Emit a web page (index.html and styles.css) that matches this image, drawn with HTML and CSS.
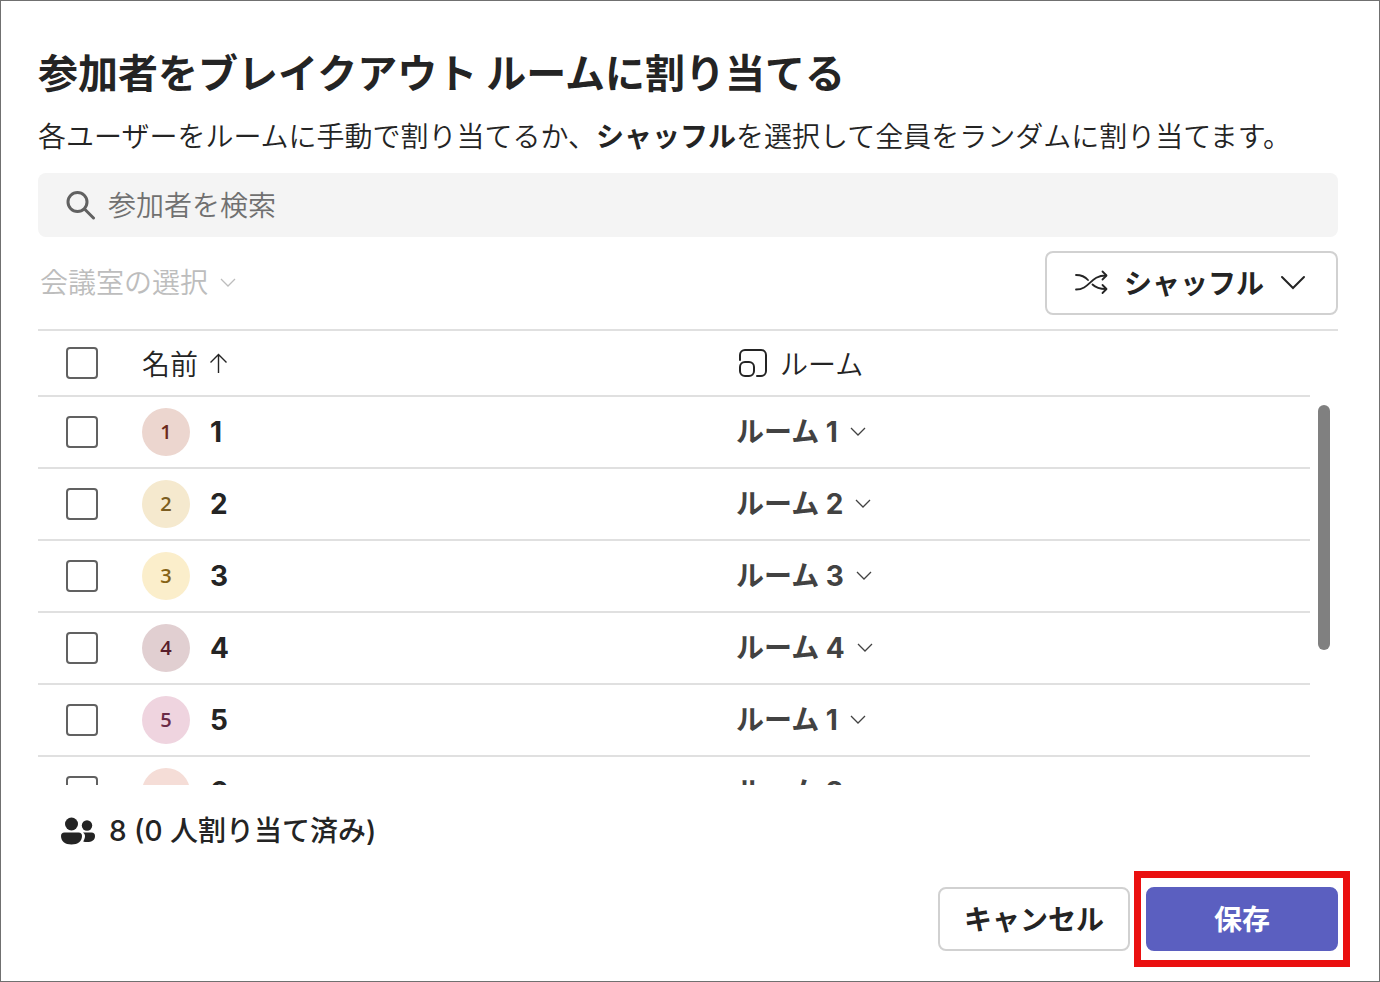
FILE: index.html
```html
<!DOCTYPE html>
<html lang="ja">
<head>
    <meta charset="UTF-8">
    <meta name="viewport" content="width=device-width, initial-scale=1.0">
    <title>参加者をブレイクアウト ルームに割り当てる</title>
    <link rel="stylesheet" href="styles.css">
</head>
<body>
    <svg class="sprite" aria-hidden="true">
        <symbol id="chevron" viewBox="0 0 16 10">
            <path d="M1 1l7 7 7-7" fill="none" stroke="currentColor" stroke-width="1.3"/>
        </symbol>
    </svg>

    <main class="dialog">
        <h1>参加者をブレイクアウト ルームに割り当てる</h1>
        <p class="description">各ユーザーをルームに手動で割り当てるか、<strong>シャッフル</strong>を選択して全員をランダムに割り当てます。</p>

        <label class="search">
            <svg width="30" height="30" viewBox="0 0 30 30" fill="none" stroke="#616161" stroke-width="3">
                <circle cx="11.500" cy="12" r="9.5"/>
                <path d="M18.500 19l9 9" stroke-linecap="round"/>
            </svg>
            <input type="text" placeholder="参加者を検索" aria-label="参加者を検索">
        </label>

        <div class="toolbar">
            <span class="picker picker-disabled">
                <select aria-label="会議室の選択" disabled>
                    <option>会議室の選択</option>
                </select>
                <svg width="16" height="10"><use href="#chevron"/></svg>
            </span>
            <button type="button" class="btn shuffle">
                <svg width="34" height="26" viewBox="0 0 34 26" fill="none" stroke="#242424" stroke-width="1.8" stroke-linecap="round" stroke-linejoin="round">
                    <path d="M2 6c5.500 0 9 1.500 12 5M2 20.500c14 0 14-14 30-14M18.500 15.500c3.500 3.500 7 4.500 13.500 4.500"/>
                    <path d="M28.500 2.500l4 4-4 4M28.500 16l4 4-4 4"/>
                </svg>
                <span>シャッフル</span>
                <svg width="26" height="16" viewBox="0 0 26 16" fill="none" stroke="#242424" stroke-width="2" stroke-linecap="round">
                    <path d="M2 3l11 11 11-11"/>
                </svg>
            </button>
        </div>

        <div class="list">
            <div class="list-view">
                <table>
                    <thead>
                        <tr>
                            <th class="col-check"><input type="checkbox" aria-label="すべて選択"></th>
                            <th class="col-name">
                                <div class="cell">
                                    <span>名前</span>
                                    <svg width="18" height="20" viewBox="0 0 18 20" fill="none" stroke="#242424" stroke-width="1.4">
                                        <path d="M8.500 20V1.500M.5 9.500l8-8 8 8"/>
                                    </svg>
                                </div>
                            </th>
                            <th>
                                <div class="cell room-head">
                                    <svg width="30" height="30" viewBox="0 0 30 30" fill="none" stroke="#242424" stroke-width="2" stroke-linecap="round">
                                        <path d="M2 12V7a5 5 0 0 1 5-5h16a5 5 0 0 1 5 5v16a5 5 0 0 1-5 5h-4"/>
                                        <rect x="2" y="14" width="14" height="14" rx="5"/>
                                    </svg>
                                    <span>ルーム</span>
                                </div>
                            </th>
                        </tr>
                    </thead>
                    <tbody>
                        <tr>
                            <td><input type="checkbox" aria-label="1 を選択"></td>
                            <td><div class="cell person"><span class="avatar rust">1</span><span>1</span></div></td>
                            <td><span class="picker"><select aria-label="1 のルーム"><option>ルーム 1</option></select><svg width="16" height="10"><use href="#chevron"/></svg></span></td>
                        </tr>
                        <tr>
                            <td><input type="checkbox" aria-label="2 を選択"></td>
                            <td><div class="cell person"><span class="avatar brass">2</span><span>2</span></div></td>
                            <td><span class="picker"><select aria-label="2 のルーム"><option>ルーム 2</option></select><svg width="16" height="10"><use href="#chevron"/></svg></span></td>
                        </tr>
                        <tr>
                            <td><input type="checkbox" aria-label="3 を選択"></td>
                            <td><div class="cell person"><span class="avatar gold">3</span><span>3</span></div></td>
                            <td><span class="picker"><select aria-label="3 のルーム"><option>ルーム 3</option></select><svg width="16" height="10"><use href="#chevron"/></svg></span></td>
                        </tr>
                        <tr>
                            <td><input type="checkbox" aria-label="4 を選択"></td>
                            <td><div class="cell person"><span class="avatar burgundy">4</span><span>4</span></div></td>
                            <td><span class="picker"><select aria-label="4 のルーム"><option>ルーム 4</option></select><svg width="16" height="10"><use href="#chevron"/></svg></span></td>
                        </tr>
                        <tr>
                            <td><input type="checkbox" aria-label="5 を選択"></td>
                            <td><div class="cell person"><span class="avatar plum">5</span><span>5</span></div></td>
                            <td><span class="picker"><select aria-label="5 のルーム"><option>ルーム 1</option></select><svg width="16" height="10"><use href="#chevron"/></svg></span></td>
                        </tr>
                        <tr>
                            <td><input type="checkbox" aria-label="6 を選択"></td>
                            <td><div class="cell person"><span class="avatar peach">6</span><span>6</span></div></td>
                            <td><span class="picker"><select aria-label="6 のルーム"><option>ルーム 2</option></select><svg width="16" height="10"><use href="#chevron"/></svg></span></td>
                        </tr>
                    </tbody>
                </table>
            </div>
            <div class="scrollbar"><div class="thumb"></div></div>
        </div>

        <div class="summary">
            <svg width="34" height="28" viewBox="0 0 34 28" fill="#242424">
                <circle cx="10.500" cy="7" r="6.500"/>
                <circle cx="26" cy="8.500" r="5.200"/>
                <path d="M3.500 15.500h14a3.500 3.500 0 0 1 3.500 3.500c0 5-4 8.500-10.500 8.500S0 24 0 19a3.500 3.500 0 0 1 3.500-3.500z"/>
                <path d="M22 15.500h8.500A3.500 3.500 0 0 1 34 19c0 4-3 6-8 6-1.500 0-2.700-.2-3.800-.600 1.300-2 1.800-3.800 1.800-5.400 0-1.400-.8-2.600-2-3.500z"/>
            </svg>
            <span>8 (0 人割り当て済み)</span>
        </div>

        <div class="actions">
            <button type="button" class="btn">キャンセル</button>
            <div class="highlight">
                <button type="button" class="btn primary">保存</button>
            </div>
        </div>
    </main>
</body>
</html>
```
FILE: styles.css
```css
* {
    box-sizing: border-box;
}

body {
    margin: 0;
    background-color: #ffffff;
    color: #242424;
    font-family: "Noto Sans CJK JP", sans-serif;
    font-size: 28px;
    font-weight: 350;
    line-height: 40px;
}

input, select, button {
    font: inherit;
    color: inherit;
}

svg {
    display: block;
    flex: none;
}

.sprite {
    position: absolute;
    width: 0;
    height: 0;
}

.dialog {
    display: flex;
    flex-direction: column;
    height: 100vh;
    padding: 42px 41px 30px 37px;
    border: 1px solid #707070;
}

h1 {
    margin: 0;
    font-size: 40px;
    line-height: 56px;
    font-weight: 700;
}

.description {
    margin: 16px 0 18px;
}

.description strong {
    font-weight: 700;
}

.search {
    display: flex;
    align-items: center;
    gap: 12px;
    height: 64px;
    padding: 0 28px;
    border-radius: 8px;
    background-color: #f4f4f4;
}

.search input {
    flex: 1;
    height: 40px;
    padding: 0 0 2px;
    border: none;
    outline: none;
    background: none;
}

.search input::placeholder {
    color: #707070;
}

.toolbar {
    display: flex;
    align-items: center;
    justify-content: space-between;
    padding: 14px 0;
    border-bottom: 2px solid #e0e0e0;
}

.picker {
    display: inline-flex;
    align-items: center;
    gap: 12px;
    color: #424242;
    font-family: Inter, "Noto Sans CJK JP", sans-serif;
    font-weight: 700;
}

.picker select {
    appearance: none;
    field-sizing: content;
    padding: 0;
    border: none;
    background: none;
}

td .picker {
    padding-bottom: 2px;
}

.picker-disabled {
    padding-left: 2px;
    color: #bdbdbd;
    font-weight: 350;
}

.picker-disabled select {
    opacity: 1;
}

.btn {
    min-width: 192px;
    height: 64px;
    padding: 0 24px 2px;
    border: 2px solid #d1d1d1;
    border-radius: 8px;
    background-color: #ffffff;
    font-weight: 700;
    cursor: pointer;
}

.shuffle {
    display: flex;
    align-items: center;
    gap: 16px;
    padding: 0 30px 2px 27px;
}

.list {
    display: flex;
    flex: 1;
    min-height: 0;
}

.list-view {
    flex: 1;
    overflow: hidden;
}

table {
    width: 100%;
    border-collapse: separate;
    border-spacing: 0;
    table-layout: fixed;
}

th, td {
    height: 72px;
    padding: 0;
    border-bottom: 2px solid #e0e0e0;
    text-align: left;
    vertical-align: middle;
}

th {
    height: 66px;
    font-weight: 350;
}

.col-check {
    width: 104px;
}

.col-name {
    width: 594px;
}

td input, th input {
    appearance: none;
    display: block;
    width: 32px;
    height: 32px;
    margin: 0 0 0 28px;
    border: 2px solid #616161;
    border-radius: 4px;
}

.cell {
    display: flex;
    align-items: center;
    gap: 12px;
}

.room-head {
    padding-left: 2px;
}

.person {
    gap: 20px;
    font-family: Inter, sans-serif;
    font-weight: 700;
}

.avatar {
    width: 48px;
    height: 48px;
    border-radius: 50%;
    font-family: "Open Sans", sans-serif;
    font-size: 20px;
    line-height: 48px;
    font-weight: 600;
    text-align: center;
}

.rust {
    background-color: #ecd6cf;
    color: #6b2a1c;
}

.brass {
    background-color: #f5e9ce;
    color: #7c5d20;
}

.gold {
    background-color: #fbeecb;
    color: #866315;
}

.burgundy {
    background-color: #e1cfd1;
    color: #581e2b;
}

.plum {
    background-color: #efd4df;
    color: #6b2b47;
}

.peach {
    background-color: #f5ddd7;
    color: #8e4b3c;
}

.scrollbar {
    width: 28px;
    padding: 74px 8px 0;
}

.thumb {
    height: 245px;
    border-radius: 6px;
    background-color: #808080;
}

.summary {
    display: flex;
    align-items: center;
    gap: 14px;
    padding: 26px 23px 36px;
    font-family: Inter, "Noto Sans CJK JP", sans-serif;
    font-weight: 500;
}

.actions {
    display: flex;
    justify-content: flex-end;
    gap: 16px;
}

.primary {
    border-color: #5b5fc0;
    background-color: #5b5fc0;
    color: #ffffff;
}

.highlight {
    position: relative;
}

.highlight::after {
    content: "";
    position: absolute;
    inset: -16px -12px;
    border: 7px solid #ea1010;
    pointer-events: none;
}
```
